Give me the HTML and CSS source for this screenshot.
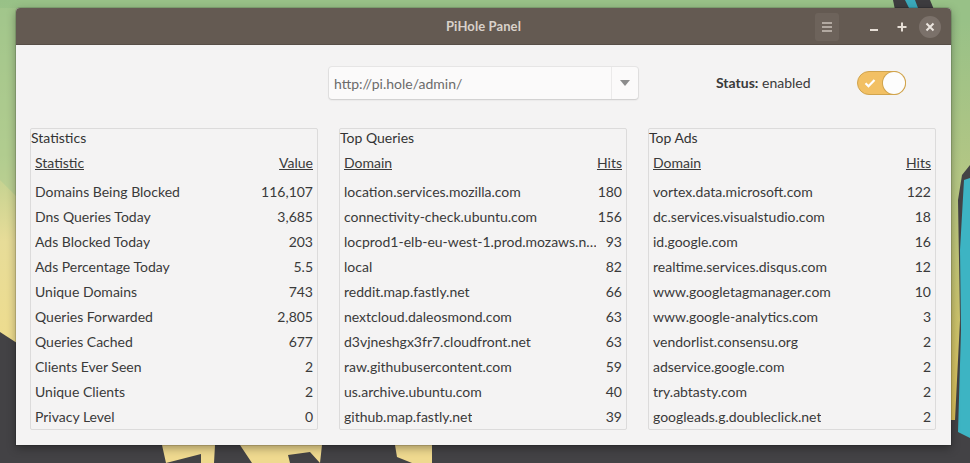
FILE: index.html
```html
<!DOCTYPE html>
<html>
<head>
<meta charset="utf-8">
<title>PiHole Panel</title>
<link rel="stylesheet" href="styles.css">
</head>
<body>
<div class="desktop">
  <svg class="wallpaper" width="970" height="463" viewBox="0 0 970 463" xmlns="http://www.w3.org/2000/svg">
    <defs>
      <linearGradient id="leftg" x1="0" y1="0" x2="0" y2="1">
        <stop offset="0" stop-color="#98c187"/>
        <stop offset="0.45" stop-color="#b9cf8f"/>
        <stop offset="0.7" stop-color="#e7dc98"/>
        <stop offset="1" stop-color="#eedc8e"/>
      </linearGradient>
      <linearGradient id="rightg" x1="0" y1="0" x2="0" y2="1">
        <stop offset="0" stop-color="#98c187"/>
        <stop offset="0.4" stop-color="#b4c684"/>
        <stop offset="1" stop-color="#dcc05a"/>
      </linearGradient>
    </defs>
    <rect width="970" height="463" fill="#434245"/>
    <polygon points="0,0 970,0 970,120 0,120" fill="#98c187"/>
    <polygon points="0,0 20,0 20,345 0,332" fill="url(#leftg)"/>
    <polygon points="20,8 0,8 0,180 20,200" fill="#a9c98f" opacity="0.5"/>
    <polygon points="945,20 970,20 970,165 962,175 958,200 960,320 955,420 945,420" fill="url(#rightg)"/>
    <polygon points="964,180 970,178 970,438 958,432 961,330 960,250" fill="#3db4c3"/>
    <polygon points="893,0 930,0 935,12 925,20 905,18 895,10" fill="#3d3c3f"/>
    <polygon points="905,0 915,0 918,8 910,10" fill="#3aa9bb"/>
    <polygon points="162,445 215,445 214,463 201,463 201,454 166,463" fill="#efd98f"/>
    <polygon points="240,445 322,445 320,463 310,452 288,455 290,463 252,463" fill="#efd98f"/>
    <polygon points="395,445 432,445 432,463 412,463 397,457" fill="#efd98f"/>
  </svg>

  <div class="window">
    <header class="titlebar">
      <div class="title">PiHole Panel</div>
      <div class="controls">
        <button class="menu-btn" aria-label="Menu">
          <svg width="12" height="12" viewBox="0 0 12 12"><path d="M1 2h10M1 6h10M1 10h10" stroke="#c9c1b9" stroke-width="1.6"/></svg>
        </button>
        <button class="wm-btn" aria-label="Minimize">
          <svg width="12" height="12" viewBox="0 0 12 12"><path d="M2 9h8" stroke="#e6ded6" stroke-width="2"/></svg>
        </button>
        <button class="wm-btn" aria-label="Maximize">
          <svg width="12" height="12" viewBox="0 0 12 12"><path d="M1.5 6h9M6 1.5v9" stroke="#e6ded6" stroke-width="2"/></svg>
        </button>
        <button class="close-btn" aria-label="Close">
          <svg width="10" height="10" viewBox="0 0 10 10"><path d="M1.5 1.5l7 7M8.5 1.5l-7 7" stroke="#ebe5df" stroke-width="2"/></svg>
        </button>
      </div>
    </header>

    <main class="content">
      <div class="toolbar">
        <div class="combo">
          <span class="combo-text">http://pi.hole/admin/</span>
          <span class="combo-arrow">
            <svg width="10" height="6" viewBox="0 0 10 6"><path d="M0 0h10L5 6z" fill="#8c8c8c"/></svg>
          </span>
        </div>
        <div class="status"><b>Status:</b> enabled</div>
        <div class="switch">
          <svg class="check" width="12" height="10" viewBox="0 0 12 10"><path d="M1.5 5.2l3 3L10.5 2" stroke="#fff" stroke-width="2.2" fill="none"/></svg>
          <span class="knob"></span>
        </div>
      </div>

      <div class="panels">
        <section class="panel">
          <div class="panel-label">Statistics</div>
          <div class="row head"><span>Statistic</span><span>Value</span></div>
          <div class="row"><span>Domains Being Blocked</span><span>116,107</span></div>
          <div class="row"><span>Dns Queries Today</span><span>3,685</span></div>
          <div class="row"><span>Ads Blocked Today</span><span>203</span></div>
          <div class="row"><span>Ads Percentage Today</span><span>5.5</span></div>
          <div class="row"><span>Unique Domains</span><span>743</span></div>
          <div class="row"><span>Queries Forwarded</span><span>2,805</span></div>
          <div class="row"><span>Queries Cached</span><span>677</span></div>
          <div class="row"><span>Clients Ever Seen</span><span>2</span></div>
          <div class="row"><span>Unique Clients</span><span>2</span></div>
          <div class="row"><span>Privacy Level</span><span>0</span></div>
        </section>
        <section class="panel">
          <div class="panel-label">Top Queries</div>
          <div class="row head"><span>Domain</span><span>Hits</span></div>
          <div class="row"><span>location.services.mozilla.com</span><span>180</span></div>
          <div class="row"><span>connectivity-check.ubuntu.com</span><span>156</span></div>
          <div class="row"><span>locprod1-elb-eu-west-1.prod.mozaws.n…</span><span>93</span></div>
          <div class="row"><span>local</span><span>82</span></div>
          <div class="row"><span>reddit.map.fastly.net</span><span>66</span></div>
          <div class="row"><span>nextcloud.daleosmond.com</span><span>63</span></div>
          <div class="row"><span>d3vjneshgx3fr7.cloudfront.net</span><span>63</span></div>
          <div class="row"><span>raw.githubusercontent.com</span><span>59</span></div>
          <div class="row"><span>us.archive.ubuntu.com</span><span>40</span></div>
          <div class="row"><span>github.map.fastly.net</span><span>39</span></div>
        </section>
        <section class="panel">
          <div class="panel-label">Top Ads</div>
          <div class="row head"><span>Domain</span><span>Hits</span></div>
          <div class="row"><span>vortex.data.microsoft.com</span><span>122</span></div>
          <div class="row"><span>dc.services.visualstudio.com</span><span>18</span></div>
          <div class="row"><span>id.google.com</span><span>16</span></div>
          <div class="row"><span>realtime.services.disqus.com</span><span>12</span></div>
          <div class="row"><span>www.googletagmanager.com</span><span>10</span></div>
          <div class="row"><span>www.google-analytics.com</span><span>3</span></div>
          <div class="row"><span>vendorlist.consensu.org</span><span>2</span></div>
          <div class="row"><span>adservice.google.com</span><span>2</span></div>
          <div class="row"><span>try.abtasty.com</span><span>2</span></div>
          <div class="row"><span>googleads.g.doubleclick.net</span><span>2</span></div>
        </section>
      </div>
    </main>
  </div>
</div>
</body>
</html>
```

FILE: styles.css
```css
* { box-sizing: border-box; }
html, body { margin: 0; padding: 0; }
body {
  width: 970px;
  height: 463px;
  overflow: hidden;
  font-family: "Lato", "Open Sans", sans-serif;
  color: #333;
}
.desktop {
  position: relative;
  width: 970px;
  height: 463px;
}
.wallpaper {
  position: absolute;
  left: 0;
  top: 0;
}
.window {
  position: absolute;
  left: 16px;
  top: 8px;
  width: 935px;
  height: 437px;
  background: #f4f3f3;
  border-radius: 4px 4px 0 0;
  box-shadow: 0 3px 10px rgba(0,0,0,0.35), 0 0 0 1px rgba(0,0,0,0.12);
  display: flex;
  flex-direction: column;
}
.titlebar {
  height: 37px;
  flex: none;
  background: #645a52;
  border-radius: 4px 4px 0 0;
  border-bottom: 1px solid #574e47;
  position: relative;
  display: flex;
  align-items: center;
  justify-content: center;
}
.title {
  font-weight: bold;
  font-size: 13px;
  color: #d9d1ca;
  letter-spacing: 0.1px;
}
.controls {
  position: absolute;
  right: 10px;
  top: 5px;
  display: flex;
  align-items: center;
}
.controls button {
  border: 0;
  padding: 0;
  margin: 0;
  background: none;
  display: flex;
  align-items: center;
  justify-content: center;
}
.controls .menu-btn {
  width: 24px;
  height: 28px;
  border-radius: 3px;
  background: #6d635b;
  margin-right: 21px;
}
.controls .wm-btn {
  width: 28px;
  height: 28px;
}
.controls .close-btn {
  width: 22px;
  height: 22px;
  border-radius: 50%;
  background: #7b716a;
  margin-left: 3px;
}
.content {
  flex: 1;
  display: flex;
  flex-direction: column;
  padding: 22px 15px 15px 14px;
}
.toolbar {
  display: flex;
  align-items: center;
  height: 32px;
  padding-left: 299px;
}
.combo {
  width: 309px;
  height: 32px;
  background: #fbfafa;
  border-radius: 3px;
  box-shadow: 0 1px 2px rgba(0,0,0,0.12), 0 0 0 1px rgba(0,0,0,0.05);
  display: flex;
  align-items: stretch;
}
.combo-text {
  flex: 1;
  display: flex;
  align-items: center;
  padding-left: 5px;
  font-size: 14px;
  color: #6b6b6b;
}
.combo-arrow {
  width: 27px;
  border-left: 1px solid #ebeaea;
  display: flex;
  align-items: center;
  justify-content: center;
}
.status {
  margin-left: 78px;
  margin-bottom: 2px;
  font-size: 14px;
  color: #3a3a3a;
}
.status b { font-weight: bold; }
.switch {
  margin-left: 46px;
  width: 49px;
  height: 24px;
  border-radius: 12px;
  background: #f2c064;
  border: 1px solid #d1a44d;
  position: relative;
  display: flex;
  align-items: center;
}
.check {
  margin-left: 6px;
}
.knob {
  position: absolute;
  right: 0;
  top: 0;
  width: 22px;
  height: 22px;
  border-radius: 50%;
  background: #fdfdfd;
  box-shadow: 0 0 0 1px #d1a44d;
}
.panels {
  margin-top: 29px;
  flex: 1;
  display: grid;
  grid-template-columns: 288px 288px 288px;
  column-gap: 21px;
}
.panel {
  border: 1px solid #dcdbdb;
  border-radius: 2px;
  display: flex;
  flex-direction: column;
  padding: 0 4px;
}
.panel-label {
  font-size: 14px;
  color: #333;
  margin-left: -4px;
  height: 21px;
  line-height: 18px;
}
.row {
  display: flex;
  justify-content: space-between;
  align-items: center;
  height: 25px;
  font-size: 14px;
  color: #3a3a3a;
  gap: 10px;
}
.row span:first-child {
  white-space: nowrap;
  overflow: hidden;
}
.row span:last-child { flex: none; }
.row.head {
  margin-bottom: 4px;
}
.row.head span { text-decoration: underline; }
```
